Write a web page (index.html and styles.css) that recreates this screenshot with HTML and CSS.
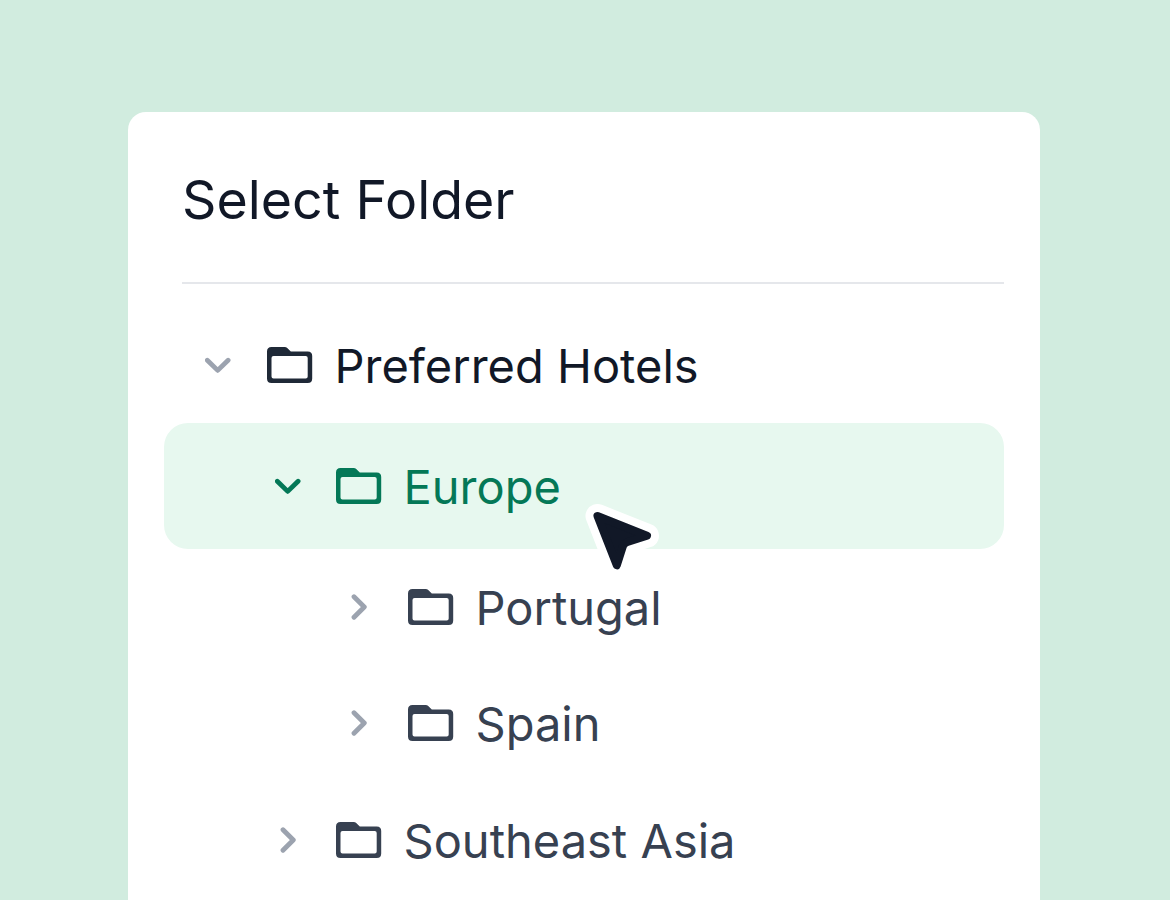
FILE: index.html
```html
<!DOCTYPE html>
<html lang="en">
<head>
    <meta charset="UTF-8">
    <meta name="viewport" content="width=device-width, initial-scale=1.0">
    <title>Select Folder</title>
    <link rel="stylesheet" href="styles.css">
</head>
<body>
    <svg class="defs" width="0" height="0">
        <symbol id="folder" viewBox="0 0 46 36">
            <path fill-rule="evenodd" d="M4.5 0H17.5Q19.3 0 20.5 1.2L23.8 4.5H40.7Q45.2 4.5 45.2 9V31.5Q45.2 36 40.7 36H4.5Q0 36 0 31.5V4.5Q0 0 4.5 0ZM6.5 9Q4.5 9 4.5 11V29.5Q4.5 31.5 6.5 31.5H38.7Q40.7 31.5 40.7 29.5V11Q40.7 9 38.7 9Z"/>
        </symbol>
        <symbol id="chevron-down" viewBox="0 0 26 26">
            <path d="M2.3 8.2L12.7 18.4L23.1 8.2"/>
        </symbol>
        <symbol id="chevron-right" viewBox="0 0 26 26">
            <path d="M8 2.7L18.3 13L8 23.3"/>
        </symbol>
    </svg>

    <div class="card">
        <h1>Select Folder</h1>

        <div class="tree">
            <div class="row root">
                <svg class="chevron"><use href="#chevron-down"/></svg>
                <svg class="folder"><use href="#folder"/></svg>
                <span>Preferred Hotels</span>
            </div>
            <div class="row level-1 selected">
                <svg class="chevron"><use href="#chevron-down"/></svg>
                <svg class="folder"><use href="#folder"/></svg>
                <span>Europe</span>
            </div>
            <div class="row level-2">
                <svg class="chevron"><use href="#chevron-right"/></svg>
                <svg class="folder"><use href="#folder"/></svg>
                <span>Portugal</span>
            </div>
            <div class="row level-2">
                <svg class="chevron"><use href="#chevron-right"/></svg>
                <svg class="folder"><use href="#folder"/></svg>
                <span>Spain</span>
            </div>
            <div class="row level-1">
                <svg class="chevron"><use href="#chevron-right"/></svg>
                <svg class="folder"><use href="#folder"/></svg>
                <span>Southeast Asia</span>
            </div>
        </div>
    </div>

    <svg class="cursor" viewBox="0 0 80 80">
        <path class="cursor-outline" d="M17.5 16L67 35.7L47.5 42Q44 43.2 42.8 46.5L36.8 65.3Z"/>
        <path class="cursor-arrow" d="M17.5 16L67 35.7L47.5 42Q44 43.2 42.8 46.5L36.8 65.3Z"/>
    </svg>
</body>
</html>
```
FILE: styles.css
```css
* {
    box-sizing: border-box;
}
body {
    height: 900px;
    margin: 0;
    padding: 112px 130.5px 0 128px;
    overflow: hidden;
    background-color: #d1ecdf;
    color: #374151;
    font-family: Inter, sans-serif;
}
.defs {
    position: absolute;
}
.card {
    height: 800px;
    padding: 0 36px;
    background-color: white;
    border-radius: 18px 18px 0 0;
}
h1 {
    height: 172px;
    margin: 0 0 0 18px;
    padding-top: 55px;
    border-bottom: 2px solid #e5e7eb;
    color: #111827;
    font-size: 53.7px;
    font-weight: 400;
    line-height: 65px;
}
.tree {
    padding-top: 22.5px;
}
.row {
    display: flex;
    align-items: center;
    height: 116.5px;
    padding-left: 41px;
    font-size: 47px;
    line-height: 58px;
}
.row span {
    padding: 2px 0 0 21.5px;
}
.level-1 {
    padding-left: 110.5px;
}
.level-2 {
    padding-left: 182px;
}
.root {
    color: #111827;
}
.root .folder {
    fill: #1f2937;
}
.selected {
    height: 125.5px;
    background-color: #e7f8ef;
    border-radius: 24px;
    color: #047857;
}
.chevron {
    width: 26px;
    height: 26px;
    margin-right: 36px;
    fill: none;
    stroke: #9ca3af;
    stroke-width: 4.8;
    stroke-linecap: round;
    stroke-linejoin: round;
}
.level-1 .chevron {
    margin-right: 35.5px;
}
.selected .chevron {
    stroke: currentColor;
}
.folder {
    width: 46px;
    height: 36px;
    fill: currentColor;
}
.cursor {
    position: absolute;
    left: 580px;
    top: 500px;
    width: 80px;
    height: 80px;
    stroke-linejoin: round;
}
.cursor-outline {
    fill: white;
    stroke: white;
    stroke-width: 24;
}
.cursor-arrow {
    fill: #111827;
    stroke: #111827;
    stroke-width: 8;
}
```
